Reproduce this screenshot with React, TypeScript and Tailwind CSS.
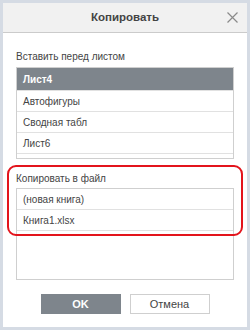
export default function App() {
  const sheets = ["Лист4", "Автофигуры", "Сводная табл", "Лист6", ""];
  const files = ["(новая книга)", "Книга1.xlsx"];

  return (
    <div className="w-[250px] h-[330px] bg-[#d5dbe4] p-[3px] font-['Liberation_Sans',Arial,sans-serif] text-[10px] text-[#444]">
      <div className="relative flex h-full flex-col bg-white">
        <div className="relative flex h-[30px] shrink-0 items-center justify-center border-b border-[#cbcbcb] bg-[#f1f1f1]">
          <span className="text-[11.5px] font-bold text-[#444]">Копировать</span>
          <svg className="absolute right-[9px] top-[9px]" width="11" height="11" viewBox="0 0 11 11">
            <path d="M0.5 0.5 L10.5 10.5 M10.5 0.5 L0.5 10.5" stroke="#8a8a8a" strokeWidth="1.2" fill="none" />
          </svg>
        </div>

        <div className="flex flex-1 flex-col px-[13px]">
          <div className="mt-[17px] h-[14px] leading-[14px]">Вставить перед листом</div>
          <div className="mt-[3px] h-[92px] overflow-hidden border border-[#cfcfcf]">
            {sheets.map((s, i) => (
              <div
                key={i}
                className={
                  i === 0
                    ? "flex h-[22px] items-center bg-[#7e858c] px-[6px] font-bold text-white"
                    : "flex h-[21px] items-center border-t border-[#e1e1e1] px-[6px]"
                }
              >
                {s}
              </div>
            ))}
          </div>

          <div className="mt-[13px] h-[14px] leading-[14px]">Копировать в файл</div>
          <div className="mt-[2px] h-[92px] overflow-hidden border border-[#cfcfcf]">
            {files.map((f, i) => (
              <div key={i} className="flex h-[21px] items-center border-b border-[#e1e1e1] px-[6px]">
                {f}
              </div>
            ))}
          </div>

          <div className="mt-[14px] flex justify-center gap-[9px]">
            <button className="h-[20px] w-[80px] bg-[#7e858c] text-[11px] font-bold text-white">OK</button>
            <button className="h-[20px] w-[80px] border border-[#cfcfcf] bg-white text-[11px] text-[#444]">Отмена</button>
          </div>
        </div>

        <div className="pointer-events-none absolute left-[4px] top-[162px] h-[71px] w-[236px] rounded-[9px] border-2 border-[#e3141c]" />
      </div>
    </div>
  );
}
